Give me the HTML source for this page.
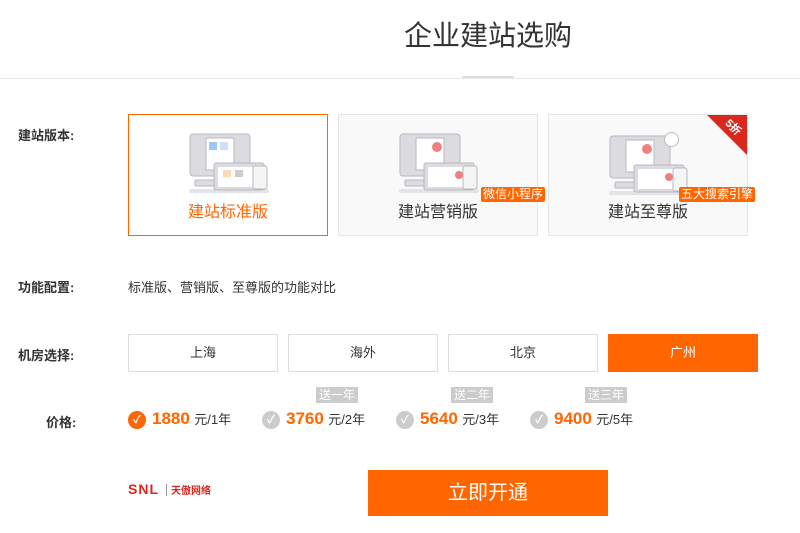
<!DOCTYPE html>
<html><head><meta charset="utf-8"><style>
*{margin:0;padding:0;box-sizing:border-box}
body{width:800px;height:533px;background:#fff;font-family:"Liberation Sans","Noto Sans CJK SC",sans-serif;position:relative;overflow:hidden;color:#333}
.a{position:absolute}
.t{left:0;width:976px;top:14px;text-align:center;font-size:28px;color:#333}
.lab{font-size:13px;font-weight:bold;color:#333}
.card{width:200px;height:122px;border:1px solid #e5e5e5;background:#f9f9f9}
.card.on{border-color:#f60;background:#fff}
.card .nm{position:absolute;left:0;right:0;top:83px;text-align:center;font-size:16px;color:#333}
.card.on .nm{color:#f60}
.tag{position:absolute;background:#f60;color:#fff;font-size:12px;line-height:15px;padding:0 2px;border-radius:2px;white-space:nowrap;z-index:2}
.room{width:150px;height:38px;border:1px solid #ddd;text-align:center;line-height:36px;font-size:13px;color:#333}
.room.on{background:#f60;border-color:#f60;color:#fff}
.ck{width:18px;height:18px;border-radius:50%;background:#ccc;color:#fff;font-size:11px;font-weight:bold;text-align:center;line-height:18px}
.ck.on{background:#f60}
.pr{font-size:17px;font-weight:bold;color:#f60}
.un{font-size:13px;color:#333}
.gift{background:#ccc;color:#fff;font-size:12px;line-height:16px;padding:0 3px}
</style></head><body>
<div class="a t">企业建站选购</div>
<div class="a" style="left:0;top:78px;width:800px;height:1px;background:#e8e8e8"></div>
<div class="a" style="left:462px;top:76px;width:52px;height:2px;background:#ddd"></div>

<div class="a lab" style="left:18px;top:125px">建站版本:</div>
<div class="a lab" style="left:18px;top:277px">功能配置:</div>
<div class="a lab" style="left:18px;top:345px">机房选择:</div>
<div class="a lab" style="left:46px;top:412px">价格:</div>

<svg width="0" height="0" style="position:absolute"><defs>
<g id="ic">
<rect x="1" y="1" width="60" height="42" rx="3" fill="#dcdce0" stroke="#b8b8c0"/>
<rect x="6" y="47" width="50" height="6" rx="1" fill="#dcdce0" stroke="#b8b8c0"/>
<rect x="0" y="56" width="80" height="4" rx="2" fill="#e4e4e8"/>
<rect x="17" y="5" width="28" height="32" fill="#fff" stroke="#b8b8c0"/>
<rect x="25" y="30" width="50" height="27" rx="2" fill="#dcdce0" stroke="#b8b8c0"/>
<rect x="29" y="34" width="42" height="20" fill="#fff"/>
<rect x="64" y="33" width="14" height="23" rx="2" fill="#f5f5f5" stroke="#b8b8c0"/>
</g></defs></svg>

<div class="a card on" style="left:128px;top:114px">
<svg class="a" style="left:60px;top:18px" width="82" height="62"><use href="#ic"/><rect x="20" y="9" width="8" height="8" fill="#9cc7ef"/><rect x="31" y="9" width="8" height="8" fill="#cde0f5"/><rect x="34" y="37" width="8" height="7" fill="#fbd9b5"/><rect x="46" y="37" width="8" height="7" fill="#ccc"/></svg>
<div class="nm">建站标准版</div></div>

<div class="a card" style="left:338px;top:114px">
<svg class="a" style="left:60px;top:18px" width="82" height="62"><use href="#ic"/><circle cx="38" cy="14" r="5" fill="#f08080"/><circle cx="60" cy="42" r="4" fill="#f08080"/></svg>
<div class="nm">建站营销版</div></div>
<div class="tag" style="left:481px;top:187px">微信小程序</div>

<div class="a card" style="left:548px;top:114px;overflow:hidden">
<svg class="a" style="left:60px;top:20px" width="82" height="62"><use href="#ic"/><circle cx="38" cy="14" r="5" fill="#f08080"/><circle cx="60" cy="42" r="4" fill="#f08080"/></svg>
<div class="a" style="left:115px;top:17px;width:15px;height:15px;border-radius:50%;border:1px solid #bbb;background:#fff"></div>
<div class="a" style="left:158px;top:0;width:0;height:0;border-left:42px solid transparent;border-top:42px solid #d9281f"></div>
<div class="a" style="left:176px;top:4px;color:#fff;font-size:11px;font-weight:bold;transform:rotate(45deg)">5折</div>
<div class="nm">建站至尊版</div></div>
<div class="tag" style="left:679px;top:187px">五大搜索引擎</div>

<div class="a" style="left:128px;top:277px;font-size:13px">标准版、营销版、至尊版的功能对比</div>

<div class="a room" style="left:128px;top:334px">上海</div>
<div class="a room" style="left:288px;top:334px">海外</div>
<div class="a room" style="left:448px;top:334px">北京</div>
<div class="a room on" style="left:608px;top:334px">广州</div>

<div class="a gift" style="left:316px;top:387px">送一年</div>
<div class="a gift" style="left:451px;top:387px">送二年</div>
<div class="a gift" style="left:585px;top:387px">送三年</div>

<div class="a ck on" style="left:128px;top:411px">✓</div>
<div class="a" style="left:152px;top:409px"><span class="pr">1880</span> <span class="un">元/1年</span></div>
<div class="a ck" style="left:262px;top:411px">✓</div>
<div class="a" style="left:286px;top:409px"><span class="pr">3760</span> <span class="un">元/2年</span></div>
<div class="a ck" style="left:396px;top:411px">✓</div>
<div class="a" style="left:420px;top:409px"><span class="pr">5640</span> <span class="un">元/3年</span></div>
<div class="a ck" style="left:530px;top:411px">✓</div>
<div class="a" style="left:554px;top:409px"><span class="pr">9400</span> <span class="un">元/5年</span></div>

<div class="a" style="left:128px;top:481px;font-size:14px;font-weight:bold;color:#d9281f;letter-spacing:1px">SNL</div>
<div class="a" style="left:166px;top:484px;width:1px;height:12px;background:#999"></div>
<div class="a" style="left:171px;top:482px;font-size:10px;font-weight:bold;color:#d9281f">天傲网络</div>
<div class="a" style="left:368px;top:470px;width:240px;height:46px;background:#f60;color:#fff;font-size:20px;text-align:center;line-height:46px">立即开通</div>
</body></html>
